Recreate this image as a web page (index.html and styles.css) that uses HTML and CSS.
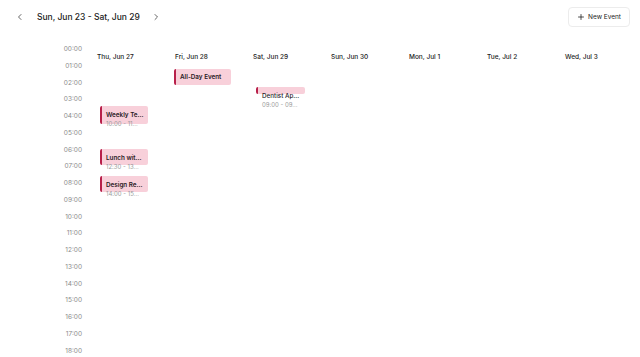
FILE: index.html
```html
<!DOCTYPE html>
<html>
<head>
    <meta charset="utf-8">
    <title>Week View</title>
    <link rel="stylesheet" href="styles.css">
</head>
<body>
    <div class="toolbar">
        <div class="nav">
            <button class="nav-btn" aria-label="Previous week">
                <svg width="8" height="8" viewBox="0 0 8 8"><path d="M5 1.5 L2.5 4 L5 6.5" fill="none" stroke="#555" stroke-width="0.9" stroke-linecap="round" stroke-linejoin="round"/></svg>
            </button>
            <h1 class="range">Sun, Jun 23 - Sat, Jun 29</h1>
            <button class="nav-btn" aria-label="Next week">
                <svg width="8" height="8" viewBox="0 0 8 8"><path d="M3 1.5 L5.5 4 L3 6.5" fill="none" stroke="#555" stroke-width="0.9" stroke-linecap="round" stroke-linejoin="round"/></svg>
            </button>
        </div>
        <button class="new-event">
            <svg width="6" height="6" viewBox="0 0 6 6"><path d="M3 0.5 V5.5 M0.5 3 H5.5" stroke="#222" stroke-width="0.8" stroke-linecap="round"/></svg>
            New Event
        </button>
    </div>

    <div class="calendar">
        <div class="times">
            <div class="time">00:00</div>
            <div class="time">01:00</div>
            <div class="time">02:00</div>
            <div class="time">03:00</div>
            <div class="time">04:00</div>
            <div class="time">05:00</div>
            <div class="time">06:00</div>
            <div class="time">07:00</div>
            <div class="time">08:00</div>
            <div class="time">09:00</div>
            <div class="time">10:00</div>
            <div class="time">11:00</div>
            <div class="time">12:00</div>
            <div class="time">13:00</div>
            <div class="time">14:00</div>
            <div class="time">15:00</div>
            <div class="time">16:00</div>
            <div class="time">17:00</div>
            <div class="time">18:00</div>
        </div>

        <div class="days">
            <div class="day">
                <div class="day-name">Thu, Jun 27</div>
                <div class="event ev-weekly">
                    <div class="ev-title">Weekly Te...</div>
                    <div class="ev-time">10:00 - 11...</div>
                </div>
                <div class="event ev-lunch">
                    <div class="ev-title">Lunch wit...</div>
                    <div class="ev-time">12:30 - 13...</div>
                </div>
                <div class="event ev-design">
                    <div class="ev-title">Design Re...</div>
                    <div class="ev-time">14:00 - 15...</div>
                </div>
            </div>
            <div class="day">
                <div class="day-name">Fri, Jun 28</div>
                <div class="event ev-allday">
                    <div class="ev-title">All-Day Event</div>
                </div>
            </div>
            <div class="day">
                <div class="day-name">Sat, Jun 29</div>
                <div class="event ev-dentist">
                    <div class="ev-title light">Dentist Ap...</div>
                    <div class="ev-time">09:00 - 09...</div>
                </div>
            </div>
            <div class="day">
                <div class="day-name">Sun, Jun 30</div>
            </div>
            <div class="day">
                <div class="day-name">Mon, Jul 1</div>
            </div>
            <div class="day">
                <div class="day-name">Tue, Jul 2</div>
            </div>
            <div class="day">
                <div class="day-name">Wed, Jul 3</div>
            </div>
        </div>
    </div>
</body>
</html>
```

FILE: styles.css
```css
body {
    font-family: Inter, "Noto Sans", sans-serif;
    margin: 0;
    background: #fff;
    color: #222;
    width: 640px;
    height: 357px;
    overflow: hidden;
}

.toolbar {
    display: flex;
    justify-content: space-between;
    align-items: center;
    height: 34px;
    padding: 0 10px 0 16px;
    box-sizing: border-box;
    margin-bottom: 7px;
}

.nav {
    display: flex;
    align-items: center;
}

.nav-btn {
    background: none;
    border: none;
    padding: 0;
    width: 8px;
    height: 8px;
    display: flex;
    cursor: pointer;
}

.range {
    margin: 0 12px 0 13px;
    font-size: 8.5px;
    font-weight: 500;
    color: #222;
}

.new-event {
    display: flex;
    align-items: center;
    gap: 4px;
    height: 20px;
    padding: 0 8px 0 9px;
    background: #fff;
    border: 1px solid #ececec;
    border-radius: 4px;
    font-family: inherit;
    font-size: 6.5px;
    font-weight: 400;
    color: #222;
    cursor: pointer;
}

.calendar {
    display: flex;
}

.times {
    width: 82px;
    flex: none;
}

.time {
    height: 16.78px;
    line-height: 16.78px;
    font-size: 6.5px;
    color: #8a8a8a;
    text-align: right;
}

.days {
    flex: 1;
    margin-left: 12px;
    display: grid;
    grid-template-columns: repeat(7, 78px);
}

.day {
    position: relative;
}

.day-name {
    padding: 11px 0 0 3px;
    line-height: 10px;
    font-size: 6.5px;
    font-weight: 500;
    color: #222;
}

.event {
    position: absolute;
    left: 6px;
    width: 48px;
    box-sizing: border-box;
    background: #f8d0da;
    border-left: 2px solid #b8204a;
    border-radius: 2px;
    padding: 4px 0 0 4px;
}

.ev-title {
    font-size: 6.3px;
    font-weight: 600;
    line-height: 10px;
    color: #2a1a1f;
    white-space: nowrap;
}

.ev-title.light {
    font-weight: 500;
}

.ev-time {
    font-size: 6px;
    line-height: 8px;
    color: #9a9a9a;
    white-space: nowrap;
}

.ev-weekly {
    top: 65px;
    height: 18px;
}

.ev-lunch {
    top: 108px;
    height: 16px;
}

.ev-design {
    top: 135px;
    height: 16px;
}

.ev-allday {
    top: 28px;
    left: 2px;
    width: 57px;
    height: 16px;
    padding-top: 3px;
}

.ev-dentist {
    top: 46px;
    width: 49px;
    height: 7px;
}
```
